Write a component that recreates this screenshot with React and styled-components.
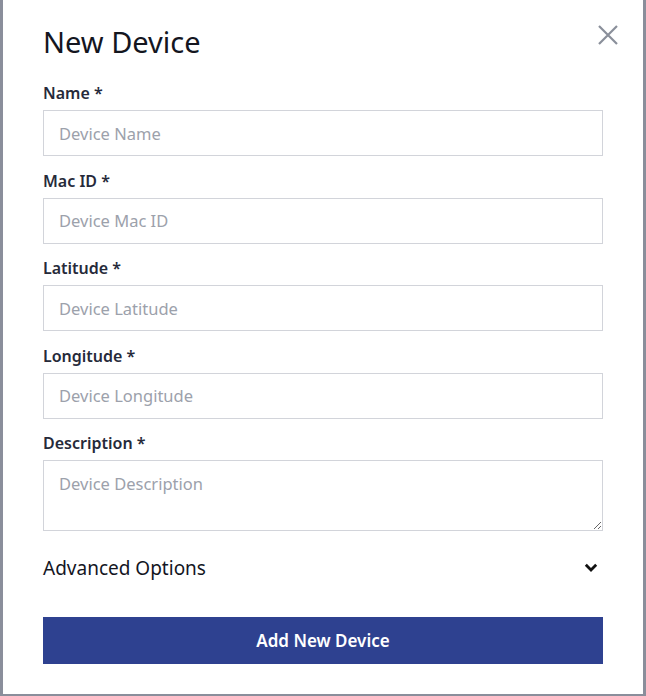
import React from "react";
import styled, { createGlobalStyle } from "styled-components";

const Global = createGlobalStyle`
  html, body { margin: 0; padding: 0; background: #8a8e9b; }
  body { font-family: "Noto Sans", "Open Sans", sans-serif; }
  * { box-sizing: border-box; }
`;

const Backdrop = styled.div`
  width: 646px;
  height: 696px;
  background: #8a8e9b;
  padding-left: 3px;
  overflow: hidden;
`;

const Modal = styled.div`
  position: relative;
  width: 640px;
  background: #ffffff;
  padding: 25px 40px 30px;
  display: flex;
  flex-direction: column;
`;

const Title = styled.h2`
  margin: 0 0 23px;
  font-size: 29px;
  line-height: 34px;
  font-weight: 400;
  color: #14161f;
`;

const Close = styled.button`
  position: absolute;
  top: 25px;
  right: 25px;
  width: 20px;
  height: 20px;
  padding: 0;
  border: 0;
  background: none;
  display: flex;
  align-items: center;
  justify-content: center;
  cursor: pointer;
`;

const Field = styled.div`
  display: flex;
  flex-direction: column;
  margin-bottom: 13.5px;
`;

const Label = styled.label`
  font-size: 16px;
  line-height: 22px;
  font-weight: 600;
  color: #262a3a;
  margin-bottom: 6px;
`;

const Input = styled.input`
  width: 100%;
  height: 46px;
  border: 1px solid #d2d4da;
  border-radius: 0;
  padding: 0 15px;
  font-family: inherit;
  font-size: 16.5px;
  color: #333;
  outline: none;
  &::placeholder { color: #9ca1ab; }
`;

const TextArea = styled.textarea`
  width: 100%;
  height: 71px;
  border: 1px solid #d2d4da;
  border-radius: 0;
  padding: 12px 15px;
  font-family: inherit;
  font-size: 16.5px;
  line-height: 22px;
  color: #333;
  outline: none;
  resize: vertical;
  display: block;
  &::placeholder { color: #9ca1ab; }
`;

const Advanced = styled.div`
  display: flex;
  align-items: center;
  justify-content: space-between;
  height: 30px;
  margin: 8px 0 34px;
  padding-right: 5px;
  font-size: 19px;
  color: #14161f;
`;

const Submit = styled.button`
  width: 100%;
  height: 47px;
  border: 0;
  background: #2e4190;
  color: #ffffff;
  font-family: inherit;
  font-size: 17px;
  font-weight: 600;
  cursor: pointer;
`;

const fields = [
  { label: "Name *", ph: "Device Name" },
  { label: "Mac ID *", ph: "Device Mac ID" },
  { label: "Latitude *", ph: "Device Latitude" },
  { label: "Longitude *", ph: "Device Longitude" },
];

export default function App() {
  return (
    <>
      <Global />
      <Backdrop>
        <Modal>
          <Title>New Device</Title>
          <Close aria-label="Close">
            <svg width="20" height="20" viewBox="0 0 20 20">
              <path d="M1 1 L19 19 M19 1 L1 19" stroke="#8a8f9a" strokeWidth="2.2" fill="none" />
            </svg>
          </Close>
          {fields.map((f) => (
            <Field key={f.label}>
              <Label>{f.label}</Label>
              <Input placeholder={f.ph} />
            </Field>
          ))}
          <Field>
            <Label>Description *</Label>
            <TextArea placeholder="Device Description" />
          </Field>
          <Advanced>
            <span>Advanced Options</span>
            <svg width="14" height="10" viewBox="0 0 14 10">
              <path d="M1.8 1.8 L7 7 L12.2 1.8" stroke="#111" strokeWidth="2.8" fill="none" />
            </svg>
          </Advanced>
          <Submit>Add New Device</Submit>
        </Modal>
      </Backdrop>
    </>
  );
}
